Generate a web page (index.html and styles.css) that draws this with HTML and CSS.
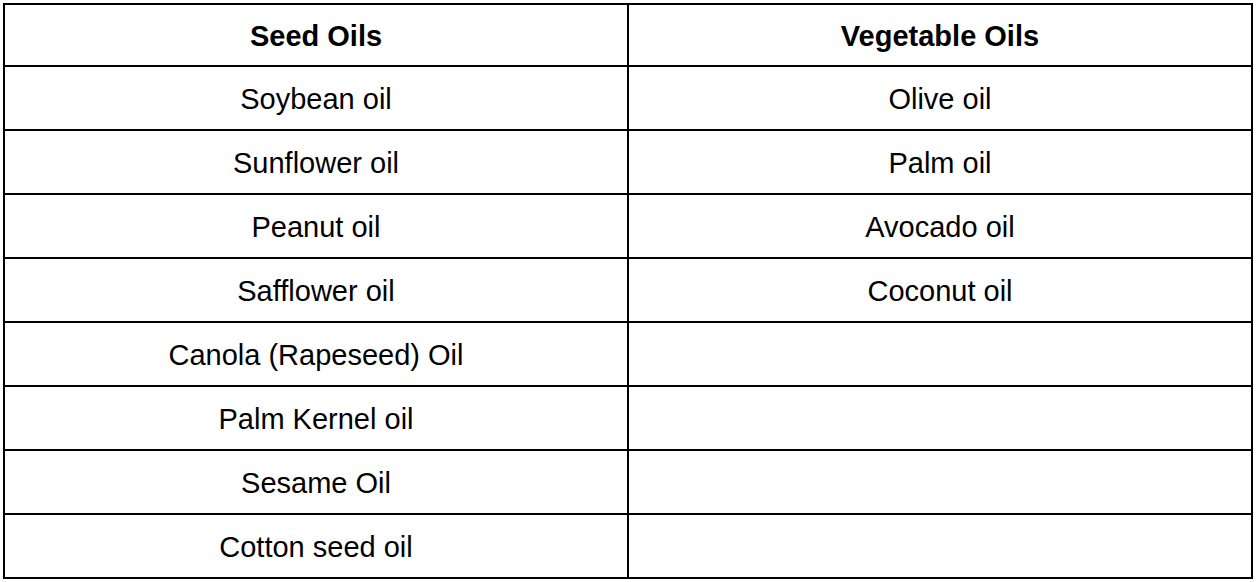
FILE: index.html
```html
<!DOCTYPE html>
<html>
<head>
<meta charset="utf-8">
<link rel="stylesheet" href="styles.css">
</head>
<body>
<table class="oils">
  <thead>
    <tr><th>Seed Oils</th><th>Vegetable Oils</th></tr>
  </thead>
  <tbody>
    <tr><td>Soybean oil</td><td>Olive oil</td></tr>
    <tr><td>Sunflower oil</td><td>Palm oil</td></tr>
    <tr><td>Peanut oil</td><td>Avocado oil</td></tr>
    <tr><td>Safflower oil</td><td>Coconut oil</td></tr>
    <tr><td>Canola (Rapeseed) Oil</td><td></td></tr>
    <tr><td>Palm Kernel oil</td><td></td></tr>
    <tr><td>Sesame Oil</td><td></td></tr>
    <tr><td>Cotton seed oil</td><td></td></tr>
  </tbody>
</table>
</body>
</html>
```
FILE: styles.css
```css
html, body {
  margin: 0;
  padding: 0;
  background: #fff;
}
body {
  padding: 3px 3px 0 3px;
  font-family: "Liberation Sans", Arial, sans-serif;
  color: #000;
}
.oils {
  width: 1250px;
  border-collapse: collapse;
  table-layout: fixed;
}
.oils th,
.oils td {
  border: 2px solid #000;
  height: 60px;
  padding: 2px 0 0 0;
  text-align: center;
  vertical-align: middle;
  font-size: 29px;
  line-height: 34px;
}
.oils th {
  font-weight: bold;
  height: 58px;
}
```
